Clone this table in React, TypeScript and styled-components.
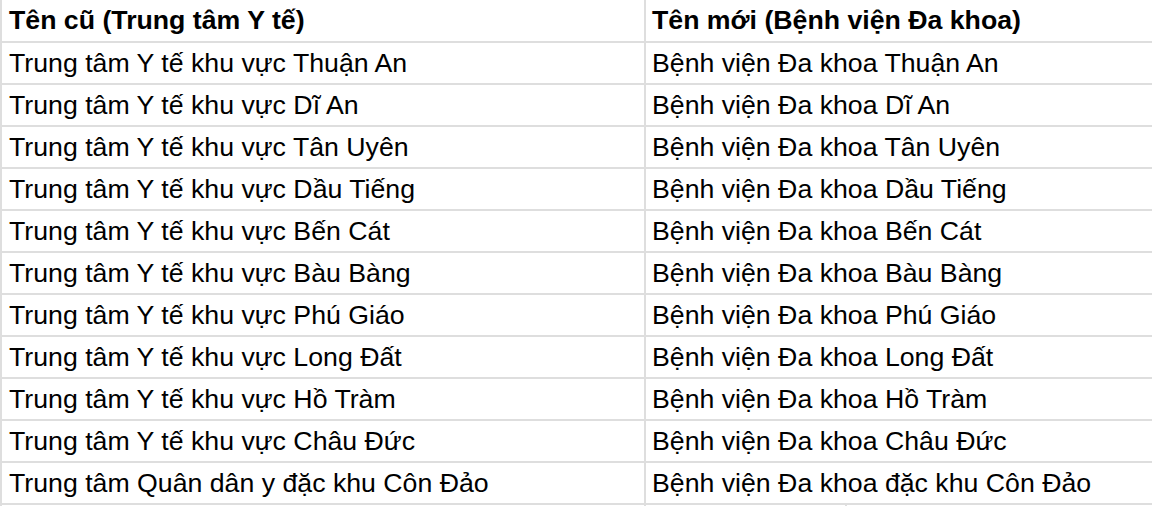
import styled, { createGlobalStyle } from "styled-components";

const GlobalStyle = createGlobalStyle`
  html, body {
    margin: 0;
    padding: 0;
    background: #ffffff;
    overflow: hidden;
  }
`;

const Sheet = styled.div`
  width: 1152px;
  height: 506px;
  overflow: hidden;
  font-family: "Liberation Sans", Arial, sans-serif;
  font-size: 26.7px;
  color: #000000;
`;

const Row = styled.div<{ $head?: boolean }>`
  display: grid;
  grid-template-columns: 646px 1fr;
  height: ${(p) => (p.$head ? "41px" : "40px")};
  border-bottom: 2px solid #dedede;
`;

const Cell = styled.div<{ $head?: boolean; $first?: boolean }>`
  display: flex;
  align-items: center;
  padding-left: ${(p) => (p.$first ? "7px" : "6px")};
  border-left: ${(p) => (p.$first ? "2px solid #dedede" : "none")};
  border-right: ${(p) => (p.$first ? "2px solid #dedede" : "none")};
  font-weight: ${(p) => (p.$head ? 700 : 400)};
  white-space: nowrap;
  overflow: hidden;
`;

const TailRow = styled.div`
  display: grid;
  grid-template-columns: 646px 201px 1fr;
  height: 40px;
`;

const TailCell = styled.div<{ $edge?: boolean }>`
  border-left: ${(p) => (p.$edge ? "2px solid #dedede" : "none")};
  border-right: 2px solid #dedede;
`;

const rows: [string, string][] = [
  ["Trung tâm Y tế khu vực Thuận An", "Bệnh viện Đa khoa Thuận An"],
  ["Trung tâm Y tế khu vực Dĩ An", "Bệnh viện Đa khoa Dĩ An"],
  ["Trung tâm Y tế khu vực Tân Uyên", "Bệnh viện Đa khoa Tân Uyên"],
  ["Trung tâm Y tế khu vực Dầu Tiếng", "Bệnh viện Đa khoa Dầu Tiếng"],
  ["Trung tâm Y tế khu vực Bến Cát", "Bệnh viện Đa khoa Bến Cát"],
  ["Trung tâm Y tế khu vực Bàu Bàng", "Bệnh viện Đa khoa Bàu Bàng"],
  ["Trung tâm Y tế khu vực Phú Giáo", "Bệnh viện Đa khoa Phú Giáo"],
  ["Trung tâm Y tế khu vực Long Đất", "Bệnh viện Đa khoa Long Đất"],
  ["Trung tâm Y tế khu vực Hồ Tràm", "Bệnh viện Đa khoa Hồ Tràm"],
  ["Trung tâm Y tế khu vực Châu Đức", "Bệnh viện Đa khoa Châu Đức"],
  ["Trung tâm Quân dân y đặc khu Côn Đảo", "Bệnh viện Đa khoa đặc khu Côn Đảo"],
];

export default function App() {
  return (
    <>
      <GlobalStyle />
      <Sheet>
        <Row $head>
          <Cell $head $first>
            Tên cũ (Trung tâm Y tế)
          </Cell>
          <Cell $head>Tên mới (Bệnh viện Đa khoa)</Cell>
        </Row>
        {rows.map(([oldName, newName]) => (
          <Row key={oldName}>
            <Cell $first>{oldName}</Cell>
            <Cell>{newName}</Cell>
          </Row>
        ))}
        <TailRow>
          <TailCell $edge />
          <TailCell />
          <div />
        </TailRow>
      </Sheet>
    </>
  );
}
